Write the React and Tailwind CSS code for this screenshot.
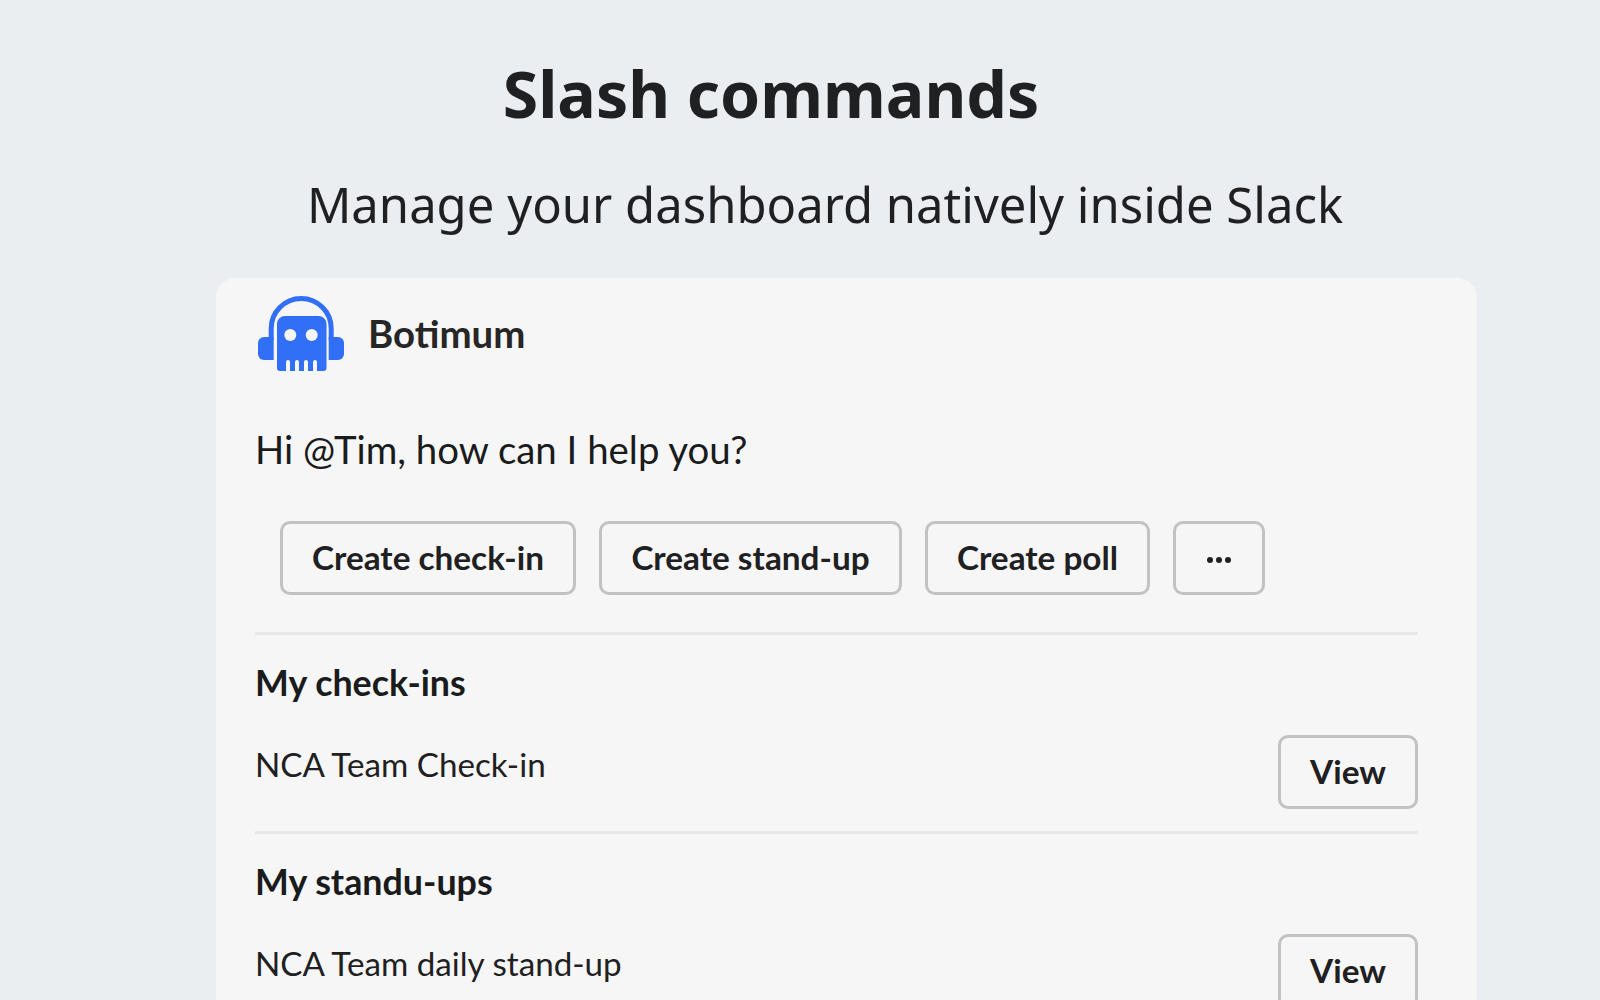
const BotLogo = () => (
  <svg width="86" height="75" viewBox="0 0 86 75" className="shrink-0">
    <path d="M13.200 44V32.500a30 30 0 0 1 60 0V44" fill="none" stroke="#316ff6" strokeWidth="5" />
    <path d="M15.700 41v23H6a6 6 0 0 1-6-6V47a6 6 0 0 1 6-6z" fill="#316ff6" />
    <path d="M70.700 41v23H80a6 6 0 0 0 6-6V47a6 6 0 0 0-6-6z" fill="#316ff6" />
    <path
      d="M27 20H60.500A8 8 0 0 1 68.500 28V72A3 3 0 0 1 65.500 75H59V66A2 2 0 0 0 55 66V75H50V66A2 2 0 0 0 46 66V75H41V66A2 2 0 0 0 37 66V75H32V66A2 2 0 0 0 28 66V75H22A3 3 0 0 1 19 72V28A8 8 0 0 1 27 20Z"
      fill="#316ff6"
    />
    <circle cx="32.300" cy="39" r="6" fill="#f6f6f6" />
    <circle cx="53.700" cy="39" r="6" fill="#f6f6f6" />
  </svg>
);

const buttonClass =
  "flex h-[74px] items-center justify-center rounded-[10px] border-[3px] border-[#c2c2c2] text-[33.300px] font-bold text-[#1f2021]";

function ActionButton({ width, children }) {
  return <div className={`${buttonClass} ${width}`}>{children}</div>;
}

function Section({ title, item }) {
  return (
    <section className="border-t-[3px] border-[#e8e8e8] pt-[25px]">
      <h3 className="text-[35.800px] font-bold leading-[46px] text-[#1a1b1c]">{title}</h3>
      <div className="mt-[29px] flex items-start justify-between">
        <p className="pt-[8px] text-[33.200px] leading-[42px] text-[#1f2021]">{item}</p>
        <ActionButton width="w-[140px]">View</ActionButton>
      </div>
    </section>
  );
}

export default function App() {
  return (
    <div className="h-[1000px] overflow-hidden bg-[#ebeef1] font-['Noto_Sans',sans-serif]">
      <h1 className="pr-[58px] pt-[49px] text-center text-[64.400px] font-bold leading-[88px] text-[#1f2021]">
        Slash commands
      </h1>
      <h2 className="mt-[33px] pl-[50px] text-center text-[49px] leading-[68px] text-[#1f2021]">
        Manage your dashboard natively inside Slack
      </h2>

      <div className="ml-[216px] mt-[40px] min-h-[730px] w-[1261px] rounded-t-[20px] bg-[#f6f6f6] pl-[39px] pr-[59px] font-['Lato',sans-serif]">
        <div className="flex items-center gap-[24px] pl-[3px] pt-[18px]">
          <BotLogo />
          <span className="text-[38.400px] font-bold text-[#262626]">Botimum</span>
        </div>

        <p className="mt-[53px] text-[38.400px] leading-[50px] text-[#1a1b1c]">Hi @Tim, how can I help you?</p>

        <div className="mt-[47px] flex gap-[23px] pl-[25px]">
          <ActionButton width="w-[296px]">Create check-in</ActionButton>
          <ActionButton width="w-[303px]">Create stand-up</ActionButton>
          <ActionButton width="w-[225px]">Create poll</ActionButton>
          <ActionButton width="w-[92px]">
            <span className="mt-[4px] flex gap-[3px]">
              <i className="size-[6px] rounded-full bg-[#1f2021]" />
              <i className="size-[6px] rounded-full bg-[#1f2021]" />
              <i className="size-[6px] rounded-full bg-[#1f2021]" />
            </span>
          </ActionButton>
        </div>

        <div className="mt-[37px] flex flex-col gap-[22px]">
          <Section title="My check-ins" item="NCA Team Check-in" />
          <Section title="My standu-ups" item="NCA Team daily stand-up" />
        </div>
      </div>
    </div>
  );
}
